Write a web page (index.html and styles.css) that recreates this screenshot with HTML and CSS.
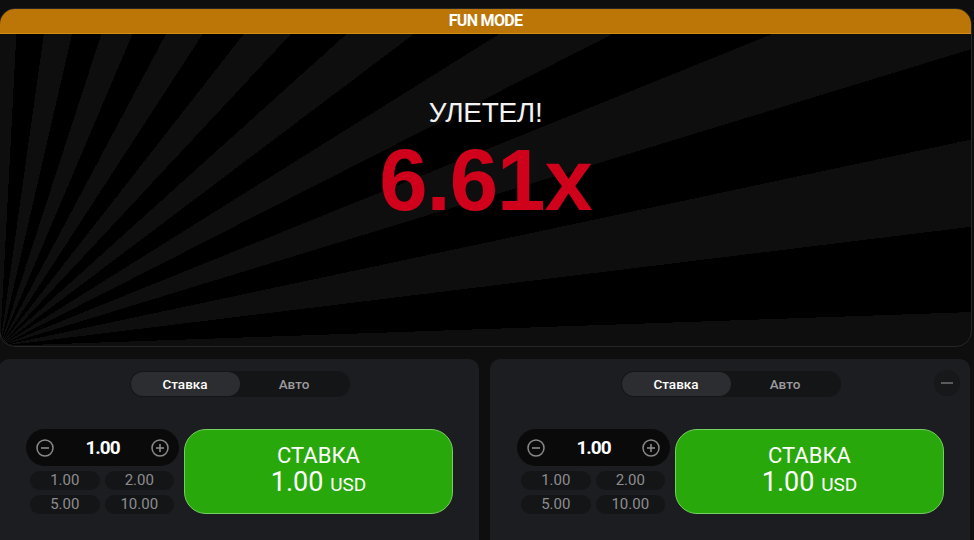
FILE: index.html
```html
<!DOCTYPE html>
<html lang="ru">
<head>
    <meta charset="UTF-8">
    <meta name="viewport" content="width=device-width, initial-scale=1.0">
    <title>Fun mode</title>
    <link rel="stylesheet" href="styles.css">
</head>
<body>
    <!--игровое поле-->
    <div class="game">
        <div class="banner">FUN MODE</div>
        <div class="result">
            <div class="result-title">УЛЕТЕЛ!</div>
            <div class="result-value">6.61x</div>
        </div>
    </div>

    <!--панели ставок-->
    <div class="panels">
        <div class="panel">
            <div class="tabs">
                <div class="tab active">Ставка</div>
                <div class="tab">Авто</div>
            </div>
            <div class="bet-row">
                <div class="bet-left">
                    <div class="stepper">
                        <span class="step-btn">
                            <svg width="18" height="18" viewBox="0 0 18 18"><circle cx="9" cy="9" r="8" fill="none" stroke="#8a8a8a" stroke-width="1.5"/><line x1="5" y1="9" x2="13" y2="9" stroke="#8a8a8a" stroke-width="1.6"/></svg>
                        </span>
                        <span class="amount">1.00</span>
                        <span class="step-btn">
                            <svg width="18" height="18" viewBox="0 0 18 18"><circle cx="9" cy="9" r="8" fill="none" stroke="#8a8a8a" stroke-width="1.5"/><line x1="5" y1="9" x2="13" y2="9" stroke="#8a8a8a" stroke-width="1.6"/><line x1="9" y1="5" x2="9" y2="13" stroke="#8a8a8a" stroke-width="1.6"/></svg>
                        </span>
                    </div>
                    <div class="quick">
                        <span>1.00</span>
                        <span>2.00</span>
                        <span>5.00</span>
                        <span>10.00</span>
                    </div>
                </div>
                <div class="bet-btn">
                    <span class="bet-label">СТАВКА</span>
                    <span class="bet-sum">1.00 <small>USD</small></span>
                </div>
            </div>
        </div>

        <div class="panel">
            <div class="tabs">
                <div class="tab active">Ставка</div>
                <div class="tab">Авто</div>
            </div>
            <!--кнопка убрать панель-->
            <div class="remove"><span></span></div>
            <div class="bet-row">
                <div class="bet-left">
                    <div class="stepper">
                        <span class="step-btn">
                            <svg width="18" height="18" viewBox="0 0 18 18"><circle cx="9" cy="9" r="8" fill="none" stroke="#8a8a8a" stroke-width="1.5"/><line x1="5" y1="9" x2="13" y2="9" stroke="#8a8a8a" stroke-width="1.6"/></svg>
                        </span>
                        <span class="amount">1.00</span>
                        <span class="step-btn">
                            <svg width="18" height="18" viewBox="0 0 18 18"><circle cx="9" cy="9" r="8" fill="none" stroke="#8a8a8a" stroke-width="1.5"/><line x1="5" y1="9" x2="13" y2="9" stroke="#8a8a8a" stroke-width="1.6"/><line x1="9" y1="5" x2="9" y2="13" stroke="#8a8a8a" stroke-width="1.6"/></svg>
                        </span>
                    </div>
                    <div class="quick">
                        <span>1.00</span>
                        <span>2.00</span>
                        <span>5.00</span>
                        <span>10.00</span>
                    </div>
                </div>
                <div class="bet-btn">
                    <span class="bet-label">СТАВКА</span>
                    <span class="bet-sum">1.00 <small>USD</small></span>
                </div>
            </div>
        </div>
    </div>
</body>
</html>
```

FILE: styles.css
```css
*{
    margin:0;
    padding:0;
    box-sizing:border-box;
}
body{
    height:540px;
    overflow:hidden;
    background-color:#0e0e0f;
    font-family:Roboto, "Liberation Sans", sans-serif;
    color:#fff;
}
/*игровое поле с лучами*/
.game{
    height:339px;
    margin:8px 2px 0 -1px;
    border:1px solid #262627;
    border-radius:16px;
    overflow:hidden;
    background:repeating-conic-gradient(from -2deg at 0 100%, #0e0e0e 0deg 5deg, #000 5deg 10deg);
}
.banner{
    height:25px;
    background-color:#bc7507;
    border-bottom:1px solid #d68b12;
    text-align:center;
    font-size:16px;
    font-weight:700;
    line-height:24px;
    letter-spacing:-0.7px;
}
.result{
    padding-top:64px;
    text-align:center;
    font-family:"Liberation Sans", Arial, sans-serif;
}
.result-title{
    font-size:28px;
    line-height:29px;
    letter-spacing:-0.3px;
    color:#f2f2f2;
}
.result-value{
    margin-top:10px;
    font-size:87px;
    line-height:86px;
    font-weight:700;
    letter-spacing:-1px;
    color:#d0021b;
}
/*панели ставок*/
.panels{
    display:flex;
    gap:11px;
    margin:12px 4px 0 -1px;
}
.panel{
    flex:1;
    height:200px;
    position:relative;
    padding:12px 26px 0 27px;
    background-color:#1c1d20;
    border-radius:10px;
}
.tabs{
    display:flex;
    width:220px;
    height:26px;
    margin:0 auto;
    padding:1px;
    background-color:#141517;
    border-radius:13px;
}
.tab{
    flex:1;
    border-radius:12px;
    text-align:center;
    font-size:13.5px;
    font-weight:500;
    line-height:24px;
    color:#9b9b9d;
}
.tab.active{
    background-color:#2c2d30;
    color:#fff;
}
.remove{
    position:absolute;
    top:11px;
    right:10px;
    width:26px;
    height:26px;
    border-radius:50%;
    background-color:#17181a;
    display:flex;
    align-items:center;
    justify-content:center;
}
.remove span{
    width:12px;
    height:2px;
    background-color:#5b5b5d;
}
.bet-row{
    display:flex;
    gap:5px;
    margin-top:32px;
}
.bet-left{
    width:153px;
}
.stepper{
    height:37px;
    display:flex;
    align-items:center;
    justify-content:space-between;
    padding:0 10px;
    background-color:#0a0a0b;
    border-radius:19px;
}
.step-btn{
    display:flex;
}
.amount{
    font-size:19px;
    font-weight:700;
    letter-spacing:-1px;
}
.quick{
    display:grid;
    grid-template-columns:1fr 1fr;
    gap:5px;
    margin-top:5px;
    padding:0 5px 0 4px;
}
.quick span{
    height:19px;
    border-radius:10px;
    background-color:#141517;
    text-align:center;
    font-size:15px;
    line-height:19px;
    color:#8d8d8f;
}
/*большая зелёная кнопка*/
.bet-btn{
    flex:1;
    height:85px;
    display:flex;
    flex-direction:column;
    align-items:center;
    justify-content:center;
    background-color:#28a80a;
    border:1px solid #74d060;
    border-radius:22px;
}
.bet-label{
    font-size:22px;
    line-height:24px;
}
.bet-sum{
    font-size:27px;
    line-height:28px;
}
.bet-sum small{
    font-size:19px;
}
```
